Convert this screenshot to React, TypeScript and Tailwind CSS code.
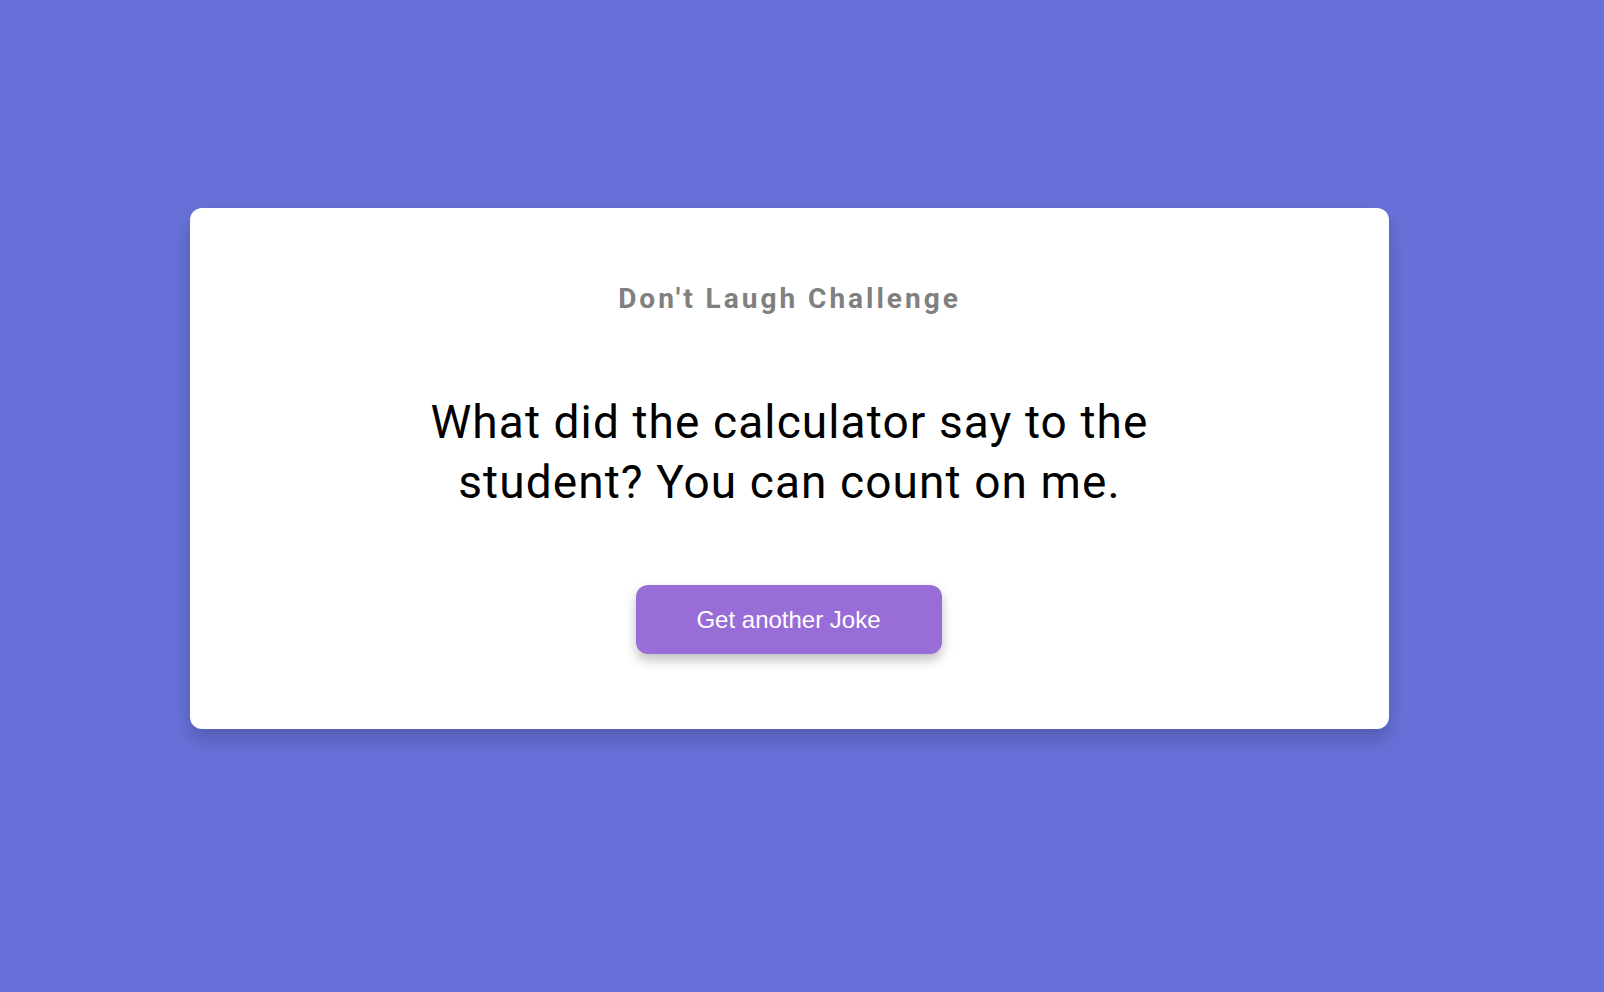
export default function App() {
  return (
    <div className="min-h-screen w-full bg-[#6771d9] pl-[190px] pt-[208px]">
      <div className="flex w-[1199px] flex-col items-center rounded-[12px] bg-white pt-[75px] pb-[75px] shadow-[0_10px_20px_rgba(0,0,0,0.2)]">
        <h3 className="font-['Roboto',sans-serif] text-[28px] font-bold leading-[32px] tracking-[3px] text-[#808080]">
          Don't Laugh Challenge
        </h3>
        <p className="mt-[77px] max-w-[800px] text-center font-['Roboto',sans-serif] text-[46px] leading-[60px] tracking-[1.1px] text-black">
          What did the calculator say to the student? You can count on me.
        </p>
        <button className="mt-[73px] mr-[2px] h-[69px] w-[306px] rounded-[12px] bg-[#986dd8] font-['Liberation_Sans',Arial,sans-serif] text-[24px] text-white shadow-[0_6px_12px_rgba(0,0,0,0.25)]">
          Get another Joke
        </button>
      </div>
    </div>
  );
}
